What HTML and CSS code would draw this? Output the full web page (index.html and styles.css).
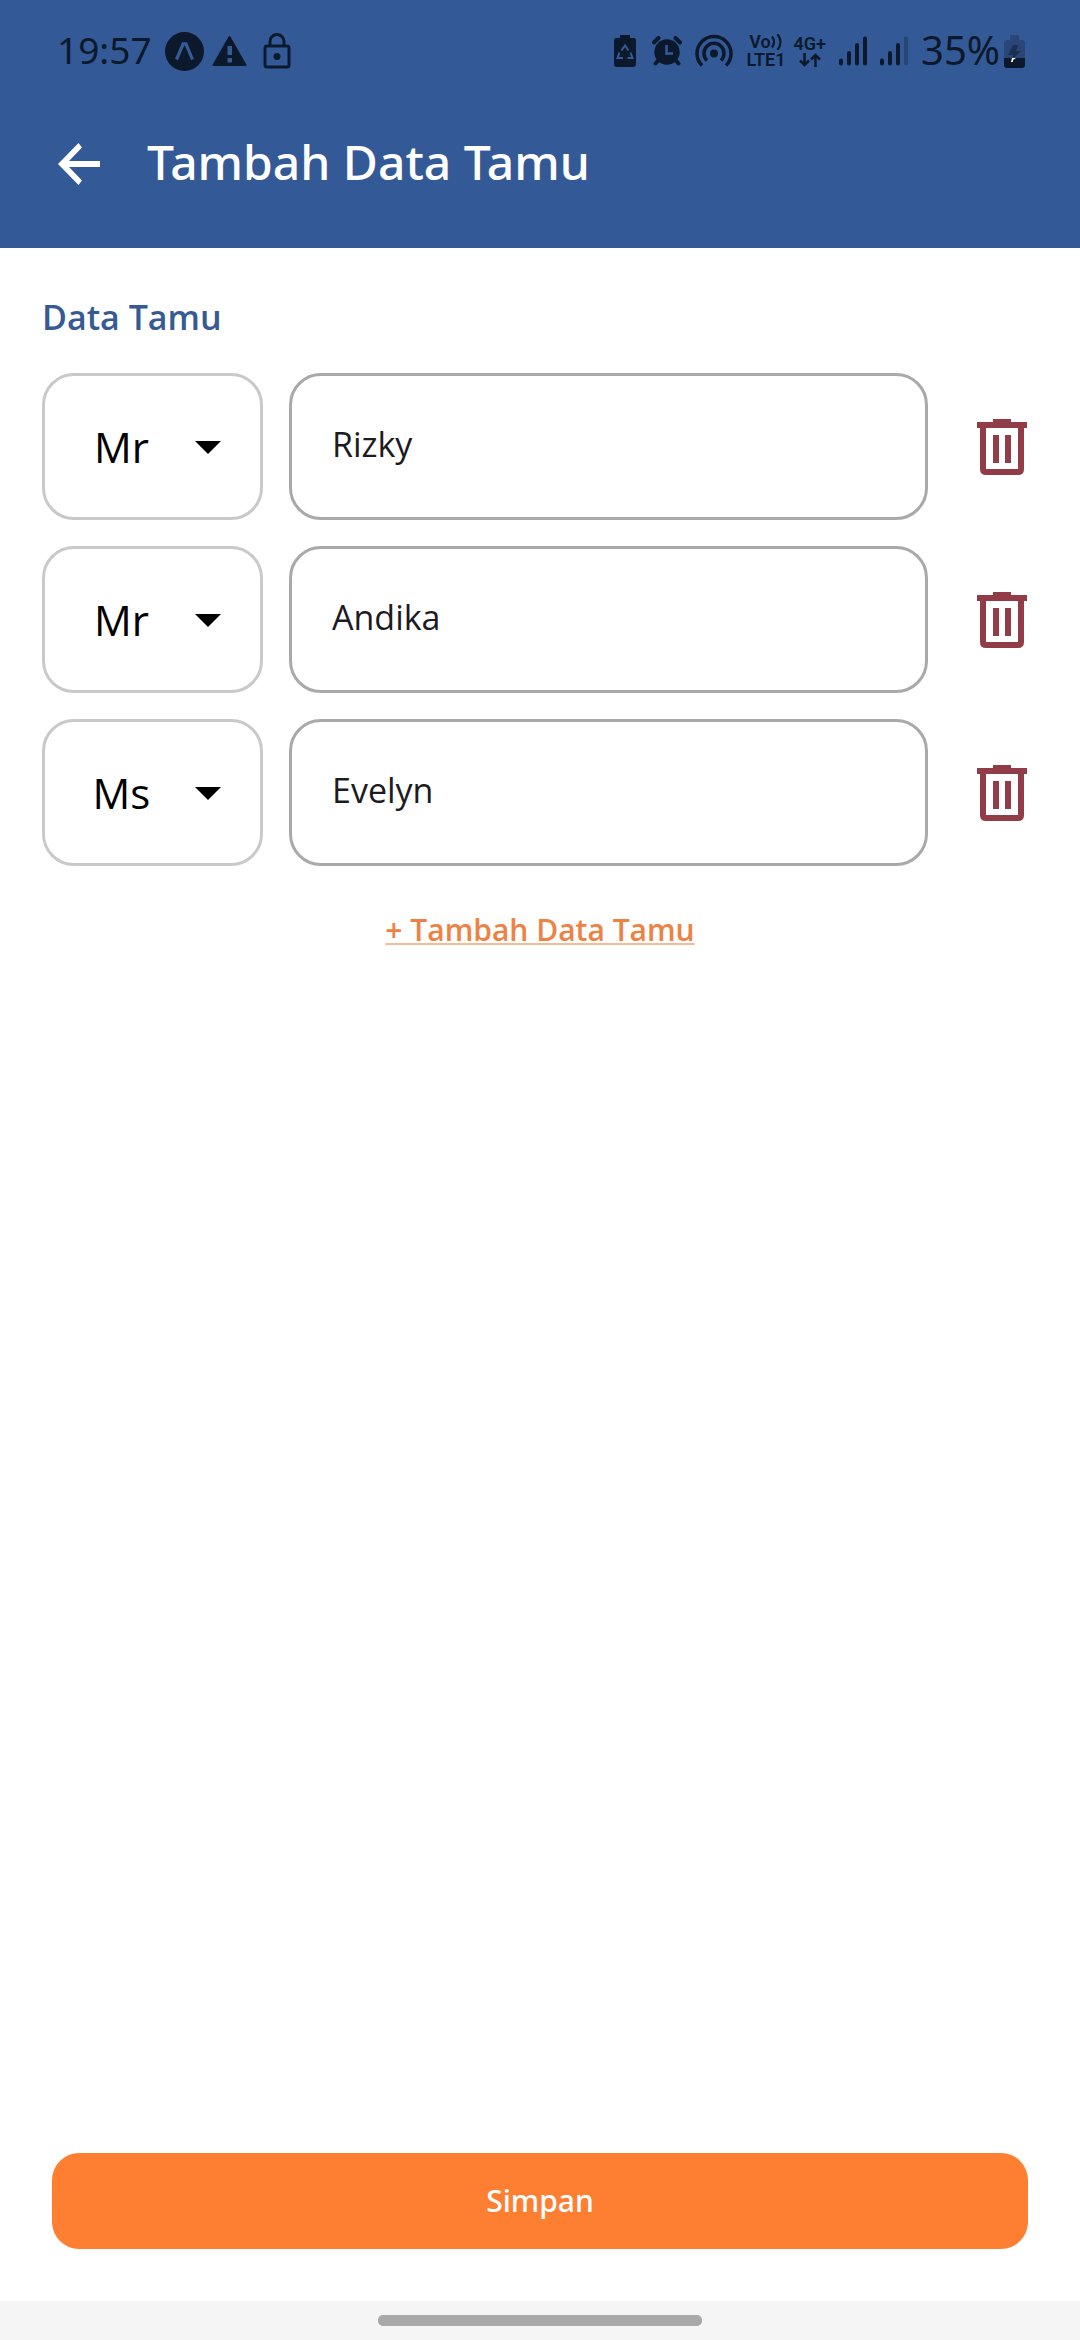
FILE: index.html
```html
<!DOCTYPE html>
<html lang="id">
<head>
<meta charset="utf-8">
<meta name="viewport" content="width=device-width, initial-scale=1">
<title>Tambah Data Tamu</title>
<link rel="stylesheet" href="styles.css">
</head>
<body>
<div class="screen">
  <header class="header">
    <div class="status">
      <div class="status-side">
        <span class="clock">19:57</span>
        <svg class="gap-m" width="39" height="39" viewBox="0 0 39 39"><circle cx="19.500" cy="19.500" r="19.500" fill="currentColor"/><path d="M11.500 27.500 18.200 11.800h2.800L27.500 27.500" fill="none" stroke="#355a96" stroke-width="3.200"/><path d="M14.500 28 19.600 18.500 24.700 28z" fill="currentColor"/></svg>
        <svg class="gap-s" width="35" height="32" viewBox="0 0 35 32"><path d="M17.500 2 33.500 30H1.500z" fill="currentColor" stroke="currentColor" stroke-width="2" stroke-linejoin="round"/><path d="M15.500 11h4.500v9h-4.500zM15.500 23h4.500v4.500h-4.500z" fill="#355a96"/></svg>
        <svg class="gap-l" width="28" height="36" viewBox="0 0 28 36" fill="none" stroke="currentColor" stroke-width="3"><rect x="2" y="13" width="24" height="21" rx="2"/><path d="M7 13V8.500a7 7 0 0 1 14 0V13"/><circle cx="14" cy="23.500" r="3.500" fill="currentColor" stroke="none"/></svg>
      </div>
      <div class="status-side">
        <svg width="22" height="32" viewBox="0 0 22 32"><path d="M6 0h10v3h4q2 0 2 2v24q0 3-3 3H3q-3 0-3-3V5q0-2 2-2h4z" fill="currentColor"/><g fill="none" stroke="#355a96" stroke-width="2"><path d="M7.500 15.500 11 10.500l3.500 5M16.500 17.500l2 5.500h-5M9 23H3.500l2-5.500"/></g></svg>
        <svg class="gap-l" width="30" height="30" viewBox="0 0 30 30"><circle cx="15" cy="16" r="12.700" fill="currentColor"/><path d="M2 6.500 6.500 2M28 6.500 23.500 2M6.500 24 3.500 27.500M23.500 24l3 3.500" stroke="currentColor" stroke-width="4" stroke-linecap="round"/><path d="M14.500 9v8.500H21" fill="none" stroke="#355a96" stroke-width="2.500"/></svg>
        <svg class="gap-m" width="38" height="34" viewBox="0 0 38 34" fill="none" stroke="currentColor" stroke-width="3.500"><path d="M7 31.500a17 17 0 1 1 24 0"/><path d="M12 26.500a10 10 0 1 1 14 0"/><circle cx="19" cy="19.500" r="4" fill="currentColor" stroke="none"/></svg>
        <span class="net gap-m"><span class="net-line">Vo<svg width="12" height="16" viewBox="0 0 12 16" fill="none" stroke="currentColor" stroke-width="2.200"><path d="M1 2.500q4 5.500 0 11M6.500 0q6 8 0 16"/></svg></span><span class="net-line">LTE1</span></span>
        <span class="net gap-s"><span class="net-line">4G+</span><svg width="22" height="14" viewBox="0 0 22 14" fill="none" stroke="currentColor" stroke-width="2.500"><path d="M5.500 0v12M1 7.500l4.500 4.500L10 7.500M16.500 14V2M12 6.500 16.500 2 21 6.500"/></svg></span>
        <svg class="gap-m" width="28" height="30" viewBox="0 0 28 30" stroke="currentColor" stroke-width="4" stroke-linecap="round"><path d="M2 24.500v3M10 17v10.500M18 9v18.500M26 2.500v25"/></svg>
        <svg class="gap-m" width="28" height="30" viewBox="0 0 28 30" stroke="currentColor" stroke-width="4" stroke-linecap="round"><path d="M2 24.500v3M10 17v10.500M18 9v18.500"/><path d="M26 2.500v25" opacity=".3"/></svg>
        <span class="clock battery-level gap-m">35%</span>
        <svg class="gap-xs" width="21" height="33" viewBox="0 0 21 33"><path d="M6 0h9v5h3q3 0 3 3v15H0V8q0-3 3-3h3z" fill="#2a4676"/><path d="M0 23h21v7q0 3-3 3H3q-3 0-3-3z" fill="currentColor"/><path d="M9 10h5l-2 6h5l-7 7H9v-3H4z" fill="#1c2f50"/><path d="M8 23h4l-3 2v2H7z" fill="#fff"/></svg>
      </div>
    </div>
    <div class="toolbar">
      <button class="icon-button" type="button" aria-label="Kembali"><svg width="42" height="42" viewBox="0 0 42 42"><path d="M42 18H11L24 4.500 20.500 0 0 21l20.500 21 3.500-4.500L11 24h31z" fill="currentColor"/></svg></button>
      <h1 class="title">Tambah Data Tamu</h1>
    </div>
  </header>
  <main class="content">
    <h2 class="section-title">Data Tamu</h2>
    <form class="guests" id="guest-form">
      <div class="guest">
        <div class="select-wrap"><select class="field select" aria-label="Sapaan tamu 1"><option selected>Mr</option><option>Ms</option></select><svg class="caret" width="26" height="13" viewBox="0 0 26 13"><path d="M0 0h26L13 13z"/></svg></div>
        <input class="field name" type="text" aria-label="Nama tamu 1" value="Rizky">
        <button class="delete" type="button" aria-label="Hapus tamu 1"><svg width="50" height="56" viewBox="0 0 50 56"><path d="M16 0h18v3h16v6h-3v41q0 6-6 6H9q-6 0-6-6V9H0V3h16zM9 9v41h32V9zM16 16h6v28h-6zM28 16h6v28h-6z" fill="currentColor" fill-rule="evenodd"/></svg></button>
      </div>
      <div class="guest">
        <div class="select-wrap"><select class="field select" aria-label="Sapaan tamu 2"><option selected>Mr</option><option>Ms</option></select><svg class="caret" width="26" height="13" viewBox="0 0 26 13"><path d="M0 0h26L13 13z"/></svg></div>
        <input class="field name" type="text" aria-label="Nama tamu 2" value="Andika">
        <button class="delete" type="button" aria-label="Hapus tamu 2"><svg width="50" height="56" viewBox="0 0 50 56"><path d="M16 0h18v3h16v6h-3v41q0 6-6 6H9q-6 0-6-6V9H0V3h16zM9 9v41h32V9zM16 16h6v28h-6zM28 16h6v28h-6z" fill="currentColor" fill-rule="evenodd"/></svg></button>
      </div>
      <div class="guest">
        <div class="select-wrap"><select class="field select" aria-label="Sapaan tamu 3"><option>Mr</option><option selected>Ms</option></select><svg class="caret" width="26" height="13" viewBox="0 0 26 13"><path d="M0 0h26L13 13z"/></svg></div>
        <input class="field name" type="text" aria-label="Nama tamu 3" value="Evelyn">
        <button class="delete" type="button" aria-label="Hapus tamu 3"><svg width="50" height="56" viewBox="0 0 50 56"><path d="M16 0h18v3h16v6h-3v41q0 6-6 6H9q-6 0-6-6V9H0V3h16zM9 9v41h32V9zM16 16h6v28h-6zM28 16h6v28h-6z" fill="currentColor" fill-rule="evenodd"/></svg></button>
      </div>
    </form>
    <a class="add" href="#guest-form">+ Tambah Data Tamu</a>
  </main>
  <div class="actions"><button class="save" type="submit" form="guest-form">Simpan</button></div>
  <div class="navbar"><div class="handle"></div></div>
</div>
</body>
</html>
```
FILE: styles.css
```css
* {
  box-sizing: border-box;
}

body {
  margin: 0;
  background: #fff;
  font-family: "Open Sans", "Noto Sans", sans-serif;
}

button,
input,
select {
  margin: 0;
  font-family: inherit;
}

button {
  padding: 0;
  border: 0;
  background: none;
}

svg {
  display: block;
  flex: none;
}

.screen {
  display: flex;
  flex-direction: column;
  min-height: 100vh;
}

.header {
  padding-bottom: 22px;
  background: #335a96;
  color: #fff;
}

.status {
  display: flex;
  justify-content: space-between;
  height: 102px;
  padding: 0 55px 0 57px;
  color: #0c192c;
}

.status-side {
  display: flex;
  align-items: center;
}

.clock {
  padding-bottom: 2px;
  font-family: "Noto Sans", sans-serif;
  font-size: 37px;
  line-height: 52px;
}

.battery-level {
  font-size: 40px;
}

.gap-xs {
  margin-left: 4px;
}

.gap-s {
  margin-left: 8px;
}

.gap-m {
  margin-left: 13px;
}

.gap-l {
  margin-left: 16px;
}

.net {
  display: flex;
  flex-direction: column;
  align-items: center;
  font-family: Roboto, sans-serif;
  font-size: 18px;
  font-weight: 600;
  line-height: 18px;
}

.net-line {
  display: flex;
  align-items: center;
}

.toolbar {
  display: flex;
  align-items: center;
  gap: 47px;
  height: 124px;
  padding: 0 58px;
}

.icon-button {
  color: #fff;
}

.title,
.save {
  font-family: "Noto Sans", sans-serif;
  font-weight: 500;
}

.title {
  margin: 0;
  padding-bottom: 4px;
  font-size: 48px;
  line-height: 64px;
}

.content {
  display: flex;
  flex: 1;
  flex-direction: column;
  padding-top: 45px;
}

.section-title {
  margin: 0 42px 32px;
  color: #355a94;
  font-size: 34px;
  font-weight: 600;
  line-height: 48px;
}

.guests {
  display: flex;
  flex-direction: column;
  gap: 26px;
  padding: 0 30px 0 42px;
}

.guest {
  display: flex;
  gap: 26px;
}

.field {
  height: 147px;
  border: 3px solid #a9a9a9;
  border-radius: 32px;
  background: #fff;
}

.select-wrap {
  display: grid;
  flex: none;
  width: 221px;
}

.select-wrap > * {
  grid-area: 1 / 1;
}

.select {
  width: 100%;
  padding: 0 62px 0 0;
  border-color: #c9c9c9;
  color: #000;
  font-size: 42px;
  text-align: center;
  text-align-last: center;
  appearance: none;
}

.caret {
  place-self: center end;
  margin: 2px 42px 0 0;
  pointer-events: none;
}

.name {
  flex: 1;
  min-width: 0;
  padding: 0 40px 5px;
  color: #1c1b1f;
  font-size: 34px;
}

.delete {
  display: grid;
  flex: none;
  place-items: center;
  width: 96px;
  color: #923c48;
}

.add {
  align-self: center;
  margin-top: 43px;
  color: #ee8244;
  font-size: 30px;
  font-weight: 600;
  line-height: 42px;
  text-decoration: underline;
  text-decoration-color: #f8b995;
  text-decoration-thickness: 2px;
  text-underline-offset: 2px;
}

.actions {
  padding: 52px;
}

.save {
  display: block;
  width: 100%;
  height: 96px;
  padding-bottom: 2px;
  border-radius: 27px;
  background: #ff7f32;
  color: #fff;
  font-size: 30px;
}

.navbar {
  display: grid;
  place-items: center;
  height: 39px;
  background: #f5f5f5;
}

.handle {
  width: 30%;
  height: 11px;
  border-radius: 5px;
  background: #a9a9a9;
}
```
